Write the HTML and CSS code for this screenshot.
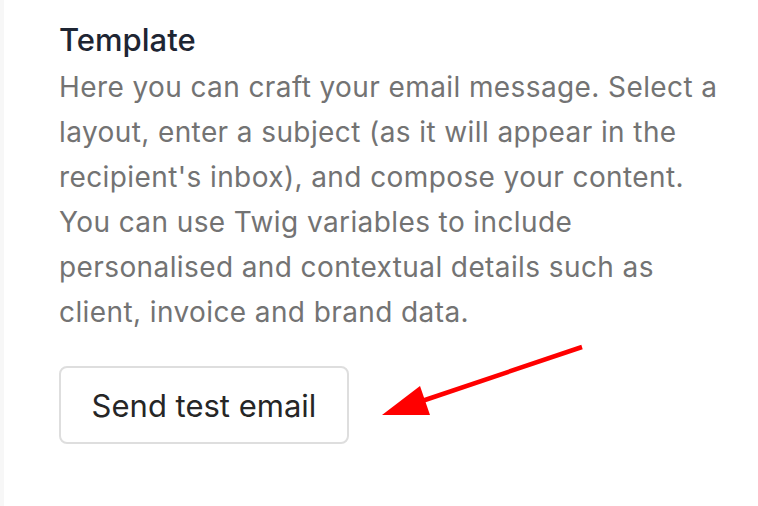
FILE: index.html
```html
<!DOCTYPE html>
<html lang="en">
<head>
  <meta charset="UTF-8">
  <meta name="viewport" content="width=device-width, initial-scale=1">
  <title>Template</title>
  <link rel="stylesheet" href="styles.css">
</head>
<body>

<div class="panel">
  <h2 class="title">Template</h2>
  <p class="desc">Here you can craft your email message. Select a layout, enter a subject (as it will appear in the recipient's inbox), and compose your content.<br>You can use Twig variables to include personalised and contextual details such as client, invoice and brand data.</p>

  <button class="test-btn">Send test email</button>

  <svg class="arrow" width="758" height="506" viewBox="0 0 758 506">
    <line x1="582" y1="347" x2="422" y2="401" stroke="#ff0000" stroke-width="4.5"/>
    <polygon points="382,415 420,386 430,415" fill="#ff0000"/>
  </svg>
</div>

</body>
</html>
```

FILE: styles.css
```css
body {
  font-family: Inter, "Noto Sans", sans-serif;
  background: #fff;
  margin: 0;
}
.panel {
  position: relative;
  min-height: 506px;
  box-sizing: border-box;
  border-left: 4px solid #f7f7f7;
  padding: 15px 30px 0 55px;
}
.title {
  margin: 0;
  font-size: 31px;
  font-weight: 500;
  line-height: 50px;
  color: #1e2533;
}
.desc {
  margin: 0;
  max-width: 672px;
  font-size: 28px;
  letter-spacing: 0.4px;
  line-height: 45px;
  color: #737373;
}
.test-btn {
  display: block;
  margin-top: 31px;
  width: 290px;
  height: 78px;
  background: #fff;
  border: 2px solid #dedede;
  border-radius: 8px;
  font-family: inherit;
  font-size: 31px;
  color: #262626;
  cursor: pointer;
}
.arrow {
  position: absolute;
  left: -4px;
  top: 0;
  pointer-events: none;
}
```
